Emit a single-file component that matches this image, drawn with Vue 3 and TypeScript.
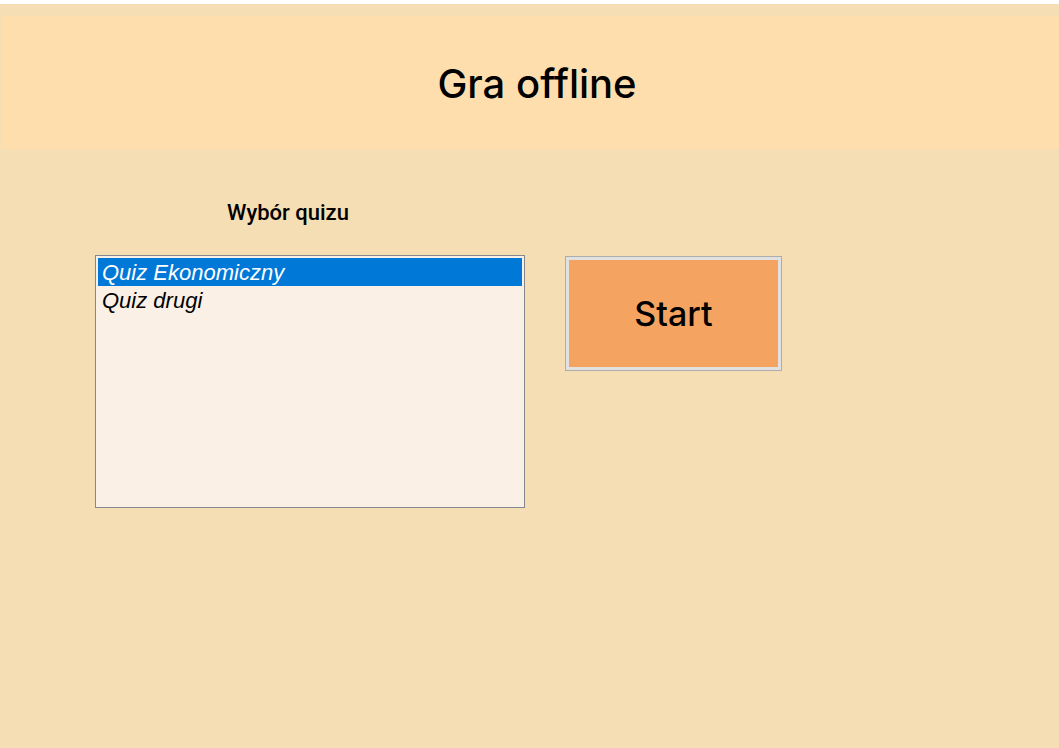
<script setup lang="ts">
import { ref } from 'vue'

interface Quiz {
  id: number
  name: string
}

const quizzes: Quiz[] = [
  { id: 1, name: 'Quiz Ekonomiczny' },
  { id: 2, name: 'Quiz drugi' },
]

const selectedId = ref<number>(1)
const activeId = ref<number | null>(null)

function start(): void {
  activeId.value = selectedId.value
}
</script>

<template>
  <div class="window">
    <header class="banner">
      <h1 class="title">Gra offline</h1>
    </header>
    <main class="content">
      <div class="picker">
        <label class="picker-label" for="quiz-list">Wybór quizu</label>
        <select id="quiz-list" v-model="selectedId" class="quiz-list" size="9">
          <option v-for="quiz in quizzes" :key="quiz.id" :value="quiz.id" class="quiz">
            {{ quiz.name }}
          </option>
        </select>
      </div>
      <button type="button" class="start" @click="start">Start</button>
    </main>
  </div>
</template>

<style>
body {
  margin: 0;
  background: #f5deb3;
}
</style>

<style scoped>
.window {
  box-sizing: border-box;
  min-height: 100vh;
  border-top: 4px solid #ffffff;
  padding-top: 12px;
  background: #f5deb3;
  color: #000000;
  font-family: "Liberation Sans", Arial, sans-serif;
}

.banner {
  display: flex;
  justify-content: center;
  margin-left: 1px;
  padding: 44px 0 41px;
  background: #ffdead;
}

.title {
  margin: 0 0 0 14px;
  font-family: Inter, "Liberation Sans", sans-serif;
  font-size: 40px;
  font-weight: 500;
  line-height: 48px;
}

.content {
  display: flex;
  align-items: flex-end;
  gap: 40px;
  padding: 50px 95px 0;
}

.picker {
  display: flex;
  flex: 0 1 430px;
  flex-direction: column;
  gap: 28px;
}

.picker-label {
  padding-right: 44px;
  font-family: Roboto, "Liberation Sans", sans-serif;
  font-size: 22px;
  font-weight: 500;
  line-height: 28px;
  text-align: center;
}

.quiz-list {
  box-sizing: border-box;
  width: 100%;
  height: 253px;
  padding: 2px;
  border: 1px solid #828790;
  border-radius: 0;
  outline: none;
  background: #faf0e6;
  color: #000000;
  font-family: "Liberation Sans", Arial, sans-serif;
  font-size: 22px;
  font-style: italic;
  overflow: hidden;
}

.quiz {
  min-height: 0;
  padding: 2px 4px 0;
  font-size: 22px;
  font-style: italic;
}

.quiz:checked {
  background: #0078d7 linear-gradient(#0078d7, #0078d7);
  color: #ffffff;
  -webkit-text-fill-color: #ffffff;
}

.start {
  flex: 0 1 217px;
  align-self: flex-start;
  height: 115px;
  margin-top: 57px;
  padding: 0;
  border: 1px solid #adadad;
  border-radius: 0;
  background: #f4a460;
  box-shadow: inset 0 0 0 3px #e1e1e1;
  color: #000000;
  font-family: Inter, "Liberation Sans", sans-serif;
  font-size: 34px;
  font-weight: 500;
  line-height: 40px;
}
</style>
